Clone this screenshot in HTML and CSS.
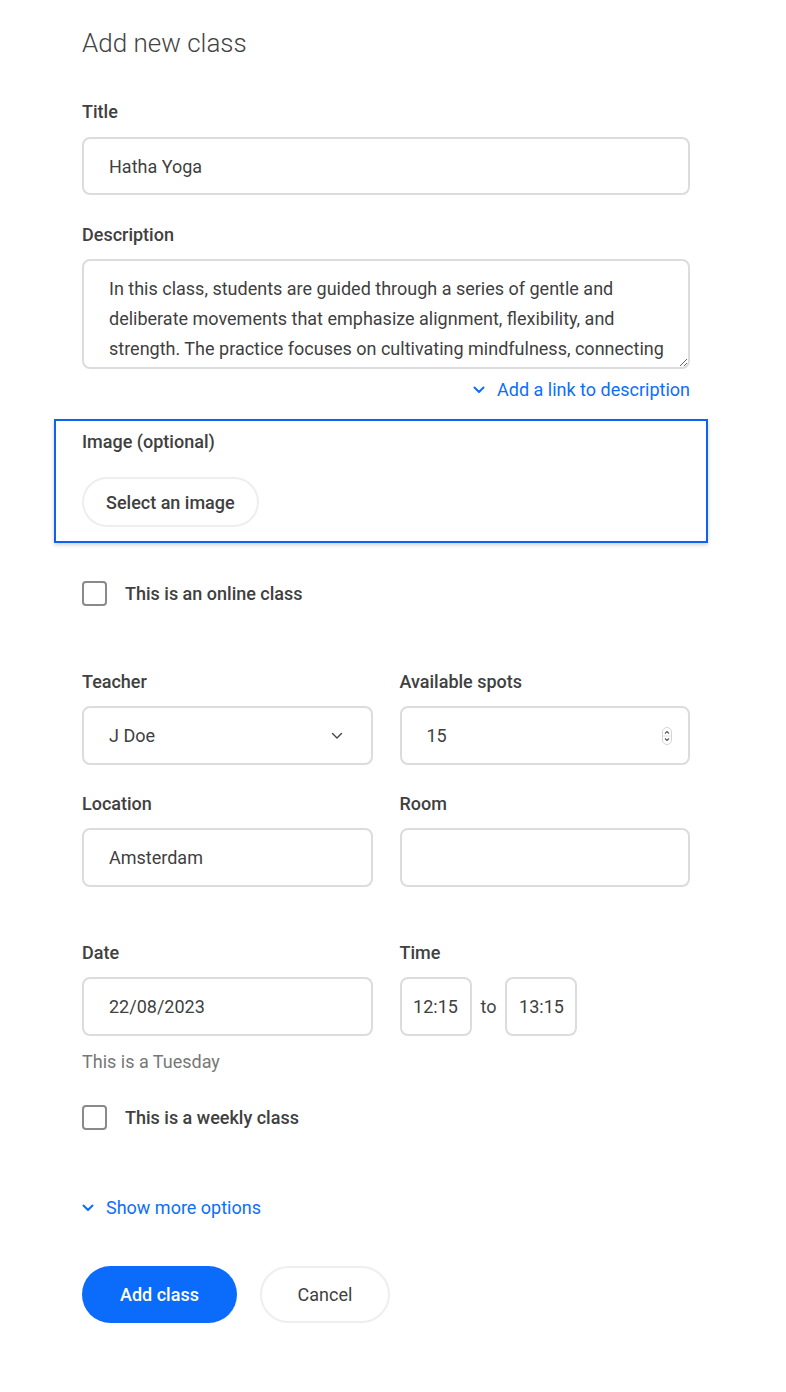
FILE: index.html
```html
<!DOCTYPE html>
<html lang="en">
<head>
<meta charset="utf-8">
<title>Add new class</title>
<link rel="stylesheet" href="styles.css">
</head>
<body>
<main class="page">
  <h1 class="page-title">Add new class</h1>

  <div class="field field-title">
    <label class="field-label" for="title">Title</label>
    <input class="text-input" id="title" type="text" value="Hatha Yoga">
  </div>

  <div class="field field-desc">
    <label class="field-label" for="desc">Description</label>
    <textarea class="text-area" id="desc">In this class, students are guided through a series of gentle and deliberate movements that emphasize alignment, flexibility, and strength. The practice focuses on cultivating mindfulness, connecting breath with movement.</textarea>
  </div>

  <div class="link-row">
    <a class="link" href="#">
      <svg class="chev" width="12" height="8" viewBox="0 0 12 8"><path d="M1.5 1.5 L6 6 L10.5 1.5" fill="none" stroke="currentColor" stroke-width="2" stroke-linecap="round" stroke-linejoin="round"/></svg>
      <span>Add a link to description</span>
    </a>
  </div>

  <section class="image-box">
    <div class="field-label">Image (optional)</div>
    <button class="pill-btn" type="button">Select an image</button>
  </section>

  <label class="check-row check-online">
    <span class="check-box"></span>
    <span class="check-label">This is an online class</span>
  </label>

  <div class="grid grid-teacher">
    <div class="field">
      <div class="field-label">Teacher</div>
      <div class="text-input select-box">
        <span>J Doe</span>
        <svg class="select-chev" width="12" height="8" viewBox="0 0 12 8"><path d="M1.5 1.5 L6 6 L10.5 1.5" fill="none" stroke="#444" stroke-width="1.4" stroke-linecap="round" stroke-linejoin="round"/></svg>
      </div>
    </div>
    <div class="field">
      <div class="field-label">Available spots</div>
      <div class="text-input number-box">
        <span>15</span>
        <svg class="spinner" width="10" height="18" viewBox="0 0 10 18"><rect x="0.5" y="0.5" width="9" height="17" rx="4.5" fill="#fff" stroke="#d4d4d4"/><line x1="1" y1="9" x2="9" y2="9" stroke="#e2e2e2"/><path d="M3 6.5 L5 4.5 L7 6.5" fill="none" stroke="#555" stroke-width="1.1"/><path d="M3 11.5 L5 13.5 L7 11.5" fill="none" stroke="#555" stroke-width="1.1"/></svg>
      </div>
    </div>
    <div class="field">
      <label class="field-label" for="loc">Location</label>
      <input class="text-input" id="loc" type="text" value="Amsterdam">
    </div>
    <div class="field">
      <label class="field-label" for="room">Room</label>
      <input class="text-input" id="room" type="text" value="">
    </div>
  </div>

  <div class="grid grid-date">
    <div class="field">
      <label class="field-label" for="date">Date</label>
      <input class="text-input" id="date" type="text" value="22/08/2023">
      <div class="hint">This is a Tuesday</div>
    </div>
    <div class="field">
      <div class="field-label">Time</div>
      <div class="time-row">
        <input class="text-input time-input" type="text" value="12:15">
        <span class="time-to">to</span>
        <input class="text-input time-input" type="text" value="13:15">
      </div>
    </div>
  </div>

  <label class="check-row check-weekly">
    <span class="check-box"></span>
    <span class="check-label">This is a weekly class</span>
  </label>

  <div class="more-row">
    <a class="link" href="#">
      <svg class="chev" width="12" height="8" viewBox="0 0 12 8"><path d="M1.5 1.5 L6 6 L10.5 1.5" fill="none" stroke="currentColor" stroke-width="2" stroke-linecap="round" stroke-linejoin="round"/></svg>
      <span>Show more options</span>
    </a>
  </div>

  <div class="actions">
    <button class="btn btn-primary" type="button">Add class</button>
    <button class="btn btn-secondary" type="button">Cancel</button>
  </div>
</main>
</body>
</html>
```

FILE: styles.css
```css
* { box-sizing: border-box; }

body {
  margin: 0;
  background: #fff;
  color: #3f3f3f;
  font-family: Roboto, "Noto Sans", "Liberation Sans", sans-serif;
  font-size: 18px;
}

.page {
  width: 608px;
  margin-left: 82px;
  padding-top: 28px;
  padding-bottom: 60px;
}

.page-title {
  margin: 0;
  font-size: 26px;
  font-weight: 300;
  line-height: 30px;
  color: #444;
}

.field { display: flex; flex-direction: column; }

.field-label {
  display: block;
  font-size: 18px;
  font-weight: 500;
  line-height: 20px;
  color: #404040;
  margin-bottom: 14px;
}

.field-title { margin-top: 44px; }
.field-title .field-label { margin-bottom: 15px; }
.field-desc { margin-top: 30px; }

.text-input {
  display: block;
  width: 100%;
  height: 59px;
  border: 2px solid #dcdcdc;
  border-radius: 8px;
  padding: 0 25px;
  font-family: inherit;
  font-size: 18px;
  color: #3f3f3f;
  background: #fff;
  outline: none;
}

.field-title .text-input { height: 58px; }

.text-area {
  display: block;
  width: 100%;
  height: 110px;
  border: 2px solid #dcdcdc;
  border-radius: 8px;
  padding: 13px 14px 0 25px;
  font-family: inherit;
  font-size: 18px;
  line-height: 30px;
  color: #3f3f3f;
  overflow: hidden;
  resize: vertical;
  outline: none;
}

.link-row {
  margin-top: 11px;
  display: flex;
  justify-content: flex-end;
  line-height: 20px;
}

.link {
  display: inline-flex;
  align-items: center;
  gap: 12px;
  color: #0d6efd;
  text-decoration: none;
  font-size: 18px;
  line-height: 20px;
}

.chev { display: block; }

.image-box {
  margin: 19px -18px 0 -28px;
  padding: 11px 16px 14px 26px;
  border: 2px solid #0d62f2;
  box-shadow: 0 2px 4px rgba(0, 0, 0, 0.18);
  display: flex;
  flex-direction: column;
  align-items: flex-start;
}

.image-box .field-label { margin-bottom: 25px; }

.pill-btn {
  height: 50px;
  padding: 0 22px;
  border: 2px solid #eeeeee;
  border-radius: 25px;
  background: #fff;
  font-family: inherit;
  font-size: 18px;
  font-weight: 500;
  color: #404040;
}

.check-row {
  display: flex;
  align-items: center;
  gap: 18px;
  height: 25px;
}

.check-online { margin-top: 38px; }
.check-weekly { margin-top: 33px; }

.check-box {
  width: 25px;
  height: 25px;
  border: 2px solid #8a8a8a;
  border-radius: 4px;
  flex: none;
}

.check-label {
  font-size: 18px;
  font-weight: 500;
  color: #404040;
}

.grid {
  display: grid;
  grid-template-columns: 1fr 1fr;
  column-gap: 27px;
  row-gap: 29px;
}

.grid-teacher { margin-top: 66px; }
.grid-date { margin-top: 56px; }

.select-box,
.number-box {
  display: flex;
  align-items: center;
  justify-content: space-between;
}

.select-box { padding-right: 28px; }
.number-box { padding-right: 16px; }

.hint {
  margin-top: 16px;
  line-height: 20px;
  font-size: 18px;
  color: #777;
}

.time-row {
  display: flex;
  align-items: center;
  gap: 9px;
}

.time-input {
  width: 72px;
  padding: 0;
  text-align: center;
}

.time-to {
  font-size: 18px;
  color: #444;
}

.more-row {
  margin-top: 66px;
  line-height: 20px;
}

.more-row .link { gap: 12px; }

.actions {
  margin-top: 48px;
  display: flex;
  gap: 23px;
}

.btn {
  height: 57px;
  border-radius: 29px;
  font-family: inherit;
  font-size: 18px;
}

.btn-primary {
  width: 155px;
  border: none;
  background: #0b6cfb;
  color: #fff;
  font-weight: 500;
}

.btn-secondary {
  width: 130px;
  border: 2px solid #eeeeee;
  background: #fff;
  color: #3f3f3f;
  font-weight: 400;
}
```
